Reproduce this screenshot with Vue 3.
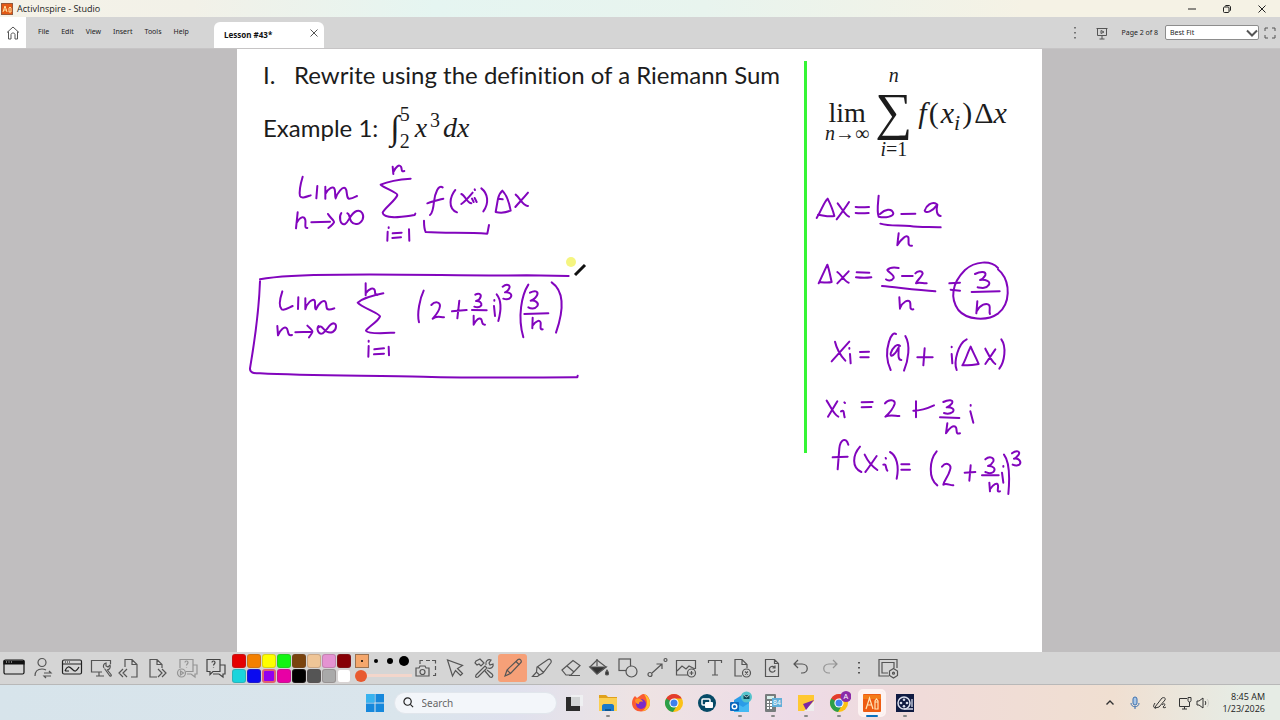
<script setup>
import { ref } from 'vue'

const zoom = ref('Best Fit')
const search = ref('')
const thickness = ref(0)
const menus = ['File', 'Edit', 'View', 'Insert', 'Tools', 'Help']

const leftTools = [
  { name: 'Desktop', svg: '<g stroke="#111"><rect x="2" y="4" width="20" height="14" rx="1.5"/><path d="M2 5h20v3H2z" fill="#111"/><path d="M4 6h1M6.500 6h1M9 6h1" stroke="#ddd"/></g>' },
  { name: 'Switch user', svg: '<circle cx="11" cy="6.500" r="4"/><path d="M4 20c0-5 2-7 7-7 2 0 3 .5 4 1M13 17h7l-2-2M20 20h-7l2 2"/>' },
  { name: 'Annotate', svg: '<g stroke="#222"><rect x="2.500" y="4" width="19" height="14" rx="1.500"/><path d="M3 8h18M5 6h1M7 6h1M9 6h1M5 15c2-5 4-5 7-2s4 3 7-2M5 15h4"/></g>' },
  { name: 'Desktop tools', svg: '<path d="M13 16H2.500V4.500h19V8M7 20h8M10 16v4"/><path d="M15 12a3.200 3.200 0 0 1 2-5v3l2 1 2-2c1 3-1 5-3 5M15.500 12.500L20.500 19.500M18 13.500l4 5c1 2-1 2-1.500 1"/>' },
  { name: 'Previous page', svg: '<path d="M8 11V3.500h7l5 5V21h-6M15 3.500v5h5M10 13l-4 4 4 4M6 13l-4 4 4 4"/>' },
  { name: 'Next page', svg: '<path d="M11 21H4V3.500h7l5 5V12M11 3.500v5h5M12 13l4 4-4 4M16 13l4 4-4 4"/>' },
  { name: 'ExpressPoll', dim: true, svg: '<path d="M5 12V3.500h13v12h-7M18 9h4v9h-2v3l-4-3h-4M10 6.500c0-2 3-2 3 0 0 1.500-1.500 1.500-1.500 3M11.500 11.500v.5"/><circle cx="6.500" cy="17" r="4"/><path d="M5.500 15l3 2-3 2z"/>' },
  { name: 'Response', svg: '<path d="M3 3.500h13v12H9l-3 3v-3H3zM16 9h5v9h-2v3l-4-3H9M8 6.500c0-2 3-2 3 0 0 1.500-1.500 1.500-1.500 3M9.500 11.500v.5" stroke="#444"/>' }
]

const swatches = ['#e50000', '#f38000', '#ffff00', '#12f512', '#79430e', '#efc597', '#e493d2', '#870006', '#19d4dc', '#0a0af0', '#9200f0', '#e800a5', '#000000', '#555555', '#a9a9a9', '#ffffff']

const rightTools = [
  { name: 'Camera', svg: '<path d="M6 8V4.500h3M12 4.500h4M18 4.500h3.500v3M21.500 10v4M21.500 17v2.500H19"/><path d="M2 12h3l1-2h5l1 2h3v8H2z"/><circle cx="8.500" cy="16" r="2.500"/>' },
  { name: 'Select', svg: '<path d="M4.500 4l5 16 3-5.500 5 5 2-2-5-5 5-3z"/>' },
  { name: 'Tools', svg: '<path d="M4 19l9-9 2 2-9 9c-2 1-3 0-2-2zM14 9c-1-4 2-6 5-5l-2 3 1 2 3-1c1 3-2 5-5 4M4 5l4-2 4 4-3 3-2-2-2 1-2-2zM13 15l5 6c2 1 4-1 2-3l-5-4"/>' },
  { name: 'Pen', active: true, svg: '<path d="M4 20l2-6L17 3.500c2-1 4 1 3 3L9.500 17.500zM6 14l3.500 3.500M15 5.500l3.500 3.500"/>' },
  { name: 'Highlighter', svg: '<path d="M2.500 20.500l4-4.500 3 3-2 1.500zM6.500 16l.5-5L18 3.500c2-1 4 1 3 3L13 17l-3.500 2M7.500 10.500l6 6"/>' },
  { name: 'Eraser', svg: '<path d="M3 14L14 4.500l7 5L12 19H7zM8 10l7 6M10 19.500h11"/>' },
  { name: 'Fill', svg: '<path d="M3 11l7-7 9 7-9 7z"/><path d="M3 11h16l-9 7z" fill="#333"/><path d="M10 10V3"/><path d="M20 14c3 4 1 5 0 5s-3-1 0-5z" fill="#333"/>' },
  { name: 'Shape', svg: '<rect x="3" y="3" width="11.500" height="11.500"/><circle cx="15.500" cy="15.500" r="5.500" fill="#d5d5d5"/>' },
  { name: 'Connector', svg: '<circle cx="5" cy="18.500" r="2"/><circle cx="20.500" cy="4" r="1.500"/><path d="M7 17L17 8M11.500 8H17v5"/>' },
  { name: 'Insert media', svg: '<path d="M14 19H2.500V4.500h19V13M3 15l5-5 4 3 3-3 6 3"/><circle cx="17.500" cy="17" r="4"/><path d="M15.500 17h4M17.500 15v4"/>' },
  { name: 'Text', svg: '<path d="M5.500 7V4.500h13V7M12 4.500V19M9 19h6"/>' },
  { name: 'Clear page', svg: '<path d="M11 20H4V3.500h7l5 5V12M11 3.500v5h5"/><circle cx="15.500" cy="17" r="4"/><path d="M14 15.500l3 3M17 15.500l-3 3"/>' },
  { name: 'Reset page', svg: '<path d="M5.500 3.500h9l4 4V20.500h-13zM14.500 3.500v4h4M15 12c-3-4-7 0-5 3 2 2 5 1 5-1M15 9.500V12h-2.500"/>' },
  { name: 'Undo', svg: '<path d="M9 4L5 8l4 4M5 8h8c7 0 7 9 0 9h-1"/>' },
  { name: 'Redo', dim: true, svg: '<path d="M15 4l4 4-4 4M19 8h-8c-7 0-7 9 0 9h1"/>' },
  { name: 'More', svg: '<path d="M12 6v1.500M12 11v1.500M12 16v1.500" stroke-width="2"/>' },
  { name: 'Toolbox', svg: '<path d="M13 20H3V3.500h18V12M12 17H6V6.500h12V12" /><path d="M13.500 15l4-2.500 4 2.500v4.500l-4 2.500-4-2.500z" fill="#d5d5d5"/><circle cx="17.500" cy="17.200" r="1"/>' }
]

const chrome = '<circle cx="12" cy="12" r="9" fill="#fbc116"/><path d="M4.200 7.500A9 9 0 0 0 11 21l4.500-7.500L12 12z" fill="#2c9f49"/><path d="M4.200 7.500L8 14l4-2V7.500z" fill="#2c9f49"/><path d="M4.200 7.500A9 9 0 0 1 19.800 7.500H12L8.500 10z" fill="#e33b2e"/><circle cx="12" cy="12" r="4.600" fill="#fff"/><circle cx="12" cy="12" r="3.500" fill="#3f80ee"/>'

const apps = [
  { name: 'Task view', svg: '<path d="M3 6h14v14H3z" fill="#2b2b2b"/><path d="M8 4h12v11H8z" fill="#f0f2f3" opacity=".85"/>' },
  { name: 'File Explorer', run: true, svg: '<path d="M3 4h7l2 2h9v14H3z" fill="#e0a11c"/><path d="M3 7h18v13H3z" fill="#fbcf52"/><path d="M6 15c0-1 1-2 2-2h8c1 0 2 1 2 2v5H6z" fill="#1b79c9"/><path d="M9 18h6v2H9z" fill="#0c5591"/>' },
  { name: 'Firefox', svg: '<path d="M12 4c4-3 9 2 9 8 0 5-4 8.500-9 8.500S3 17 3 12c0-3 1-5 3-7l2 2z" fill="#fb5b32"/><path d="M15 3c4 2 6 6 6 9 0 5-4 8-8 8 5-2 7-10 2-17z" fill="#ffc42c"/><circle cx="12" cy="13" r="5" fill="#7a2cc9"/><path d="M6 9c3-3 7-1 8 2-3-1-4 0-4 2-3 0-4-2-4-4z" fill="#ff9526"/>' },
  { name: 'Chrome', svg: chrome },
  { name: 'Connect', svg: '<circle cx="12" cy="12" r="9" fill="#064a66"/><rect x="7" y="8" width="8" height="6" rx="1" fill="none" stroke="#fff" stroke-width="1.500"/><rect x="10" y="11" width="8" height="6" rx="1" fill="#fff"/>' },
  { name: 'Outlook', run: true, svg: '<path d="M6 9l8-5 7 5v12H6z" fill="#2b9ce8"/><path d="M6 11l9 5 6-4v9H6z" fill="#45b9f3"/><rect x="2" y="11" width="9" height="9" rx="1" fill="#0b67bd"/><circle cx="6.500" cy="15.500" r="2.300" fill="none" stroke="#fff" stroke-width="1.400"/><circle cx="18.500" cy="6" r="5.500" fill="#55c3cc"/><rect x="15.500" y="4" width="6" height="4" fill="#0d4a58"/><path d="M15.500 4l3 2 3-2" stroke="#fff" stroke-width=".7" fill="none"/>' },
  { name: 'Calculator', run: true, svg: '<rect x="4" y="3" width="11" height="18" rx="1" fill="#777c7d"/><path d="M6 5h7v3H6z" fill="#d9f0ea"/><path d="M6 10h2v2H6zM9 10h2v2H9zM6 13h2v2H6zM9 13h2v2H9zM6 16h2v2H6zM9 16h2v2H9z" fill="#fff"/><rect x="11" y="7" width="10" height="9" fill="#62afd9"/><text x="12" y="14" font-family="Liberation Sans, sans-serif" font-size="7" fill="#fff">84</text>' },
  { name: 'Notes', run: true, svg: '<path d="M4 4h16v16H4z" fill="#ffc832"/><path d="M20 10v10H10z" fill="#eee"/><path d="M20 9L9 13l3 6z" fill="#7b28a5"/>' },
  { name: 'Chrome profile', run: true, svg: chrome + '<circle cx="19" cy="5.500" r="5.500" fill="#8b2ba8"/><text x="16.600" y="8" font-family="Liberation Sans, sans-serif" font-size="7" fill="#fff">A</text>' },
  { name: 'ActivInspire', run: true, active: true, svg: '<rect x="3" y="3" width="18" height="18" rx="1" fill="#ee5b13"/><path d="M3 4h18v4H3z" fill="#f47b18"/><path d="M6 18l3.500-11L13 18M7.500 14h4M15 18v-8l1.500-2 1.500 2v8zM15 11h3" fill="none" stroke="#ffe4b5" stroke-width="1.200"/>' },
  { name: 'Video editor', run: true, svg: '<rect x="3" y="3" width="18" height="18" fill="#101b42"/><circle cx="11" cy="12" r="6" fill="none" stroke="#d8dceb" stroke-width="1.500"/><circle cx="11" cy="8.800" r="1.300" fill="#d8dceb"/><circle cx="8" cy="12" r="1.300" fill="#d8dceb"/><circle cx="14" cy="12" r="1.300" fill="#d8dceb"/><circle cx="11" cy="15.200" r="1.300" fill="#d8dceb"/><path d="M11 18h9M19 8v8" stroke="#d8dceb" stroke-width="1.300"/>' }
]

/* Pen strokes, grouped by the region of the slide they were written in */
const ink = [
  { x: 250, y: 50, strokes: [
    'M158 380C152 400 147 425 150 438C153 447 170 440 182 436M202 408L199 445',
    'M226 410L226 446M226 432C234 415 250 406 254 418C257 428 254 440 257 445C262 428 278 408 286 415C293 422 288 442 296 446C305 447 315 441 321 438',
    'M143 487L138 535M140 518C150 500 163 496 166 510C168 520 162 536 172 534',
    'M184 517L240 515M234 492C240 503 254 512 252 517C250 522 240 530 235 534',
    'M274 489C266 500 270 527 285 522C298 515 300 490 320 483C335 478 343 495 338 508C330 525 312 526 304 515C296 502 300 492 292 490',
    'M428 350L430 372M430 366C437 350 448 342 453 350C457 358 452 366 463 363',
    'M482 386C450 388 410 396 392 404C405 415 442 428 442 435C440 448 400 478 398 488C400 502 430 503 455 500C475 498 490 496 494 495L496 491',
    'M413 545L412 572M416 532L416 534M428 550L455 548M427 564L453 562M477 538L478 572',
    'M522 512C522 525 524 540 527 546C590 550 650 546 712 551L717 525',
    'M578 412C565 403 555 430 552 455C550 475 548 490 540 495M532 460C545 455 565 450 580 446',
    'M616 420C600 440 592 475 621 487M634 432C645 436 652 460 664 460M668 428C658 440 645 455 634 462',
    'M666 446L671 456M674 444L680 456M674 418L675 420M694 415C714 430 718 460 700 484',
    'M744 446L737 486C750 489 770 487 782 482C778 460 770 435 757 422C750 428 746 438 744 446L758 448',
    'M797 434C810 444 820 470 834 468M834 428C820 445 805 460 796 471'
  ] },
  { x: 240, y: 250, strokes: [
    'M60 88C100 80 200 74 300 74C500 71 700 79 860 76L986 78',
    'M60 94C58 150 48 250 30 355C29 368 40 370 60 370C200 378 400 376 550 380C700 384 850 383 1012 382L1013 377',
    'M127 124C120 145 116 170 125 178C135 183 148 172 158 168M175 142L174 177',
    'M196 145L196 178C200 160 218 143 224 152C228 162 222 175 228 178C234 162 250 148 256 155C262 163 256 176 264 178C272 180 280 176 283 175',
    'M112 228L114 256C120 240 135 226 141 236C146 246 142 258 156 255',
    'M166 247L214 245M202 227C210 235 220 242 217 246C215 252 210 258 207 262',
    'M236 228C228 238 236 255 248 250C260 242 268 222 280 220C292 220 290 240 278 246C262 252 254 240 248 234C243 228 240 228 236 232',
    'M377 100L377 136M377 130C388 115 400 112 404 120C407 128 402 134 412 134',
    'M430 130C405 135 370 143 353 158C365 172 418 190 420 199C415 215 382 232 378 242C385 254 440 249 463 248',
    'M386 288L385 320M386 272L386 275M403 298L432 295M402 313L432 311M446 290L447 316',
    'M551 122C540 145 530 190 537 217M574 165C585 153 600 155 600 168C598 185 585 198 578 206C590 196 600 202 612 202',
    'M636 184L680 180M658 152L652 205M706 134C715 128 724 132 722 140C720 148 712 152 708 153C718 152 726 158 724 166C718 174 708 172 703 170',
    'M696 180L740 181M701 197L701 224C708 210 718 200 724 208C728 216 724 225 735 224',
    'M762 168L765 198M763 150L763 152M770 133C784 150 784 180 775 213',
    'M788 110C800 100 812 105 808 114C805 122 798 126 795 127C808 126 818 132 812 142C805 150 795 148 790 146',
    'M865 104C845 135 832 200 850 262M870 128C885 120 895 124 892 134C888 144 878 150 872 152C885 150 898 158 892 168C885 178 872 176 865 172',
    'M853 192L925 190M878 203L877 235M877 228C888 212 900 208 902 218C903 226 898 240 908 238M935 97C968 120 975 170 948 248'
  ] },
  { x: 790, y: 50, strokes: [
    'M80 504C95 480 102 455 113 446C120 460 130 485 133 498C118 502 100 496 84 494',
    'M143 460C155 475 165 495 177 500M177 456C165 475 150 495 140 508M197 471C210 473 225 472 237 471M197 489C210 491 225 490 236 489',
    'M266 437C264 460 260 485 266 500C285 505 310 500 310 490C305 473 285 478 270 492M334 492L376 491',
    'M440 462C425 453 408 468 404 482C408 492 428 484 442 464C438 480 440 497 452 498',
    'M271 521C300 530 330 524 360 528C390 533 420 530 452 532M326 550C324 565 323 575 322 586C335 565 350 553 355 562C358 572 350 590 366 587'
  ] },
  { x: 800, y: 240, strokes: [
    'M56 130L82 74C88 90 92 115 95 126C85 129 70 127 58 126M112 96C125 105 134 126 146 128M146 94L112 130',
    'M170 97L208 98M168 112C185 114 200 114 214 112',
    'M296 84C280 81 268 83 262 90C266 98 284 105 281 114C275 124 262 122 258 118M306 108L338 108',
    'M346 100C352 93 366 90 368 100C366 110 350 122 348 130C358 126 370 131 380 130M246 138C290 142 350 150 406 154',
    'M298 172L300 206M300 204C308 186 325 176 330 186C334 195 326 210 340 208M448 130L480 128M452 149L480 152',
    'M525 102C540 94 560 92 556 106C550 116 545 119 540 120C558 118 572 124 567 134C558 147 545 144 533 142',
    'M515 156L599 154M532 184L529 220M530 214C540 195 560 186 568 196C572 205 566 215 570 222',
    'M594 84C572 60 525 63 495 90C455 130 450 175 475 210C500 240 560 245 595 220C632 190 630 130 604 98L594 88',
    'M105 305C112 335 125 350 136 362M148 305C130 325 110 348 95 364M150 342L152 370M148 324L148 326',
    'M180 336L207 335M181 352L206 352M288 282C282 276 272 286 267 305C256 340 260 365 272 390',
    'M300 318C292 308 278 322 272 340C270 355 285 345 296 322C296 340 292 360 304 360M316 288C332 315 325 360 312 392',
    'M352 352L398 352M374 325L370 376M455 342L457 370M455 320L455 322M500 298C475 310 460 365 470 390',
    'M512 320C502 340 495 365 487 376C500 376 520 376 536 372C528 352 518 335 512 320M556 326C566 345 575 365 586 372M586 328L556 372M604 298C620 320 614 365 598 386'
  ] },
  { x: 800, y: 370, strokes: [
    'M80 92C92 110 102 135 115 140M112 94L84 140M123 124C134 118 130 130 134 142M133 97L135 99M185 97L218 96M185 112L214 111',
    'M255 100C265 86 287 88 284 102C278 120 265 132 256 140C270 133 285 138 298 138M340 122C360 122 385 114 402 106M348 94L348 142',
    'M430 96C445 88 462 88 456 100C450 108 445 110 440 112C455 111 466 118 458 126C450 132 438 131 432 129M420 142L478 144',
    'M442 160L438 190C448 174 460 163 468 172C472 182 466 194 480 190M511 124L520 158M512 105L512 107',
    'M145 224C138 200 121 208 118 235L113 298M98 262L143 260M180 230C158 255 154 292 184 306',
    'M194 254C204 275 220 292 232 300M230 258C218 275 205 295 196 306M250 284C260 280 256 295 262 302M257 264L258 266M270 246C290 256 298 290 290 326',
    'M304 283L328 283M304 299L330 299M410 244C388 270 384 325 412 346M426 290C440 273 456 285 450 300C445 320 432 332 430 344C440 338 450 347 460 346',
    'M494 308L526 306M512 286L508 332M556 268C570 256 584 264 580 274C575 284 570 286 564 288C578 287 590 296 580 306C570 314 562 308 556 306',
    'M546 316L596 316M568 338L570 364M570 358C580 342 592 336 594 346C596 355 588 368 600 364M606 308L610 338M610 288L610 290',
    'M612 254C632 280 628 340 625 372M636 250C650 239 662 244 656 254C650 262 646 265 642 266C656 264 666 275 658 284C650 289 642 286 638 284'
  ] }
]
</script>

<template>
  <div class="screen">
    <header class="title">
      <svg class="logo" viewBox="0 0 12 12"><rect width="12" height="12" rx="1" fill="#e35a16" /><path d="M2 9l2-6 2 6M3 7h3M8 9V5l1-1 1 1v4z" fill="none" stroke="#ffe0a0" /></svg>
      <span>ActivInspire - Studio</span>
      <div class="wincontrols">
        <button aria-label="Minimise"><svg viewBox="0 0 12 12"><path d="M2 6h8" /></svg></button>
        <button aria-label="Restore"><svg viewBox="0 0 12 12"><rect x="2.500" y="4" width="5.500" height="5.500" rx="1" /><path d="M4 3.500c0-1 1-1 1-1h3c1 0 1.500 1 1.500 1.500v3c0 1-1 1-1 1" /></svg></button>
        <button aria-label="Close"><svg viewBox="0 0 12 12"><path d="M2.500 2.500l7 7M9.500 2.500l-7 7" /></svg></button>
      </div>
    </header>

    <nav class="menubar">
      <button class="home" aria-label="Home"><svg viewBox="0 0 16 16"><path d="M2 7.500l6-5.500 6 5.500M3.500 6.500V14H6V9.500c0-2 4-2 4 0V14h2.500V6.500" /></svg></button>
      <div class="menus"><button v-for="m in menus" :key="m">{{ m }}</button></div>
      <div class="tab"><span>Lesson #43*</span><button aria-label="Close tab"><svg viewBox="0 0 10 10"><path d="M1.500 1.500l7 7M8.500 1.500l-7 7" /></svg></button></div>
      <div class="view">
        <button aria-label="More options"><svg viewBox="0 0 16 16"><path d="M8 2v1.500M8 7v1.500M8 12v1.500" stroke-width="1.500" /></svg></button>
        <button aria-label="Present"><svg viewBox="0 0 16 16"><path d="M2.500 3.500h11M3.500 3.500v7h9v-7M8 10.500V14M5.500 14h5M7 5.500l3 1.500-3 1.500z" /></svg></button>
        <label for="zoom">Page 2 of 8</label>
        <div class="select">
          <select id="zoom" v-model="zoom"><option>Best Fit</option><option>Page Width</option></select>
          <svg viewBox="0 0 12 8"><path d="M1 1.500l5 5 5-5" /></svg>
        </div>
        <button aria-label="Full screen"><svg viewBox="0 0 16 16"><path d="M3 6V3h3M10 3h3v3M13 10v3h-3M6 13H3v-3" /></svg></button>
      </div>
    </nav>

    <main class="workspace">
      <article class="page">
        <section class="notes">
          <h1><span>I.</span>Rewrite using the definition of a Riemann Sum</h1>
          <p class="example">
            <span>Example 1:</span>
            <span class="math integral">
              <span class="int">∫</span>
              <span class="bounds"><span>5</span><span>2</span></span>
              <span><i>x</i><sup>3</sup><i>dx</i></span>
            </span>
          </p>
        </section>
        <aside>
          <div class="math formula">
            <div class="limit"><span>lim</span><small><i>n</i>→∞</small></div>
            <div class="sum"><small><i>n</i></small><span>∑</span><small><i>i</i>=1</small></div>
            <div class="term"><i>f</i><b>(</b><i>x<sub>i</sub></i><b>)</b>Δ<i>x</i></div>
          </div>
        </aside>
        <svg class="ink" viewBox="237 49 805 603" preserveAspectRatio="xMinYMin meet" role="img" aria-label="Handwritten working">
          <g v-for="g in ink" :key="g.x + '-' + g.y" :transform="`translate(${g.x} ${g.y}) scale(.33333)`">
            <path v-for="(d, i) in g.strokes" :key="i" :d="d" />
          </g>
          <circle cx="571" cy="262" r="5" class="spot" />
          <path d="M575 275L585 265" class="nib" />
        </svg>
      </article>
    </main>

    <div class="toolbar">
      <div class="group left">
        <button v-for="t in leftTools" :key="t.name" :aria-label="t.name" :class="{ dim: t.dim }"><svg viewBox="0 0 24 24" v-html="t.svg"></svg></button>
      </div>
      <div class="palette">
        <button v-for="(c, i) in swatches" :key="c" :aria-label="'Colour ' + c" :class="{ chosen: i === 10 }" :style="{ background: c }"></button>
      </div>
      <div class="pens">
        <div class="sizes">
          <button class="on" aria-label="Size 1"><svg viewBox="0 0 14 14"><circle cx="7" cy="7" r="1" /></svg></button>
          <button aria-label="Size 2"><svg viewBox="0 0 14 14"><circle cx="7" cy="7" r="2" /></svg></button>
          <button aria-label="Size 3"><svg viewBox="0 0 14 14"><circle cx="7" cy="7" r="3" /></svg></button>
          <button aria-label="Size 4"><svg viewBox="0 0 14 14"><circle cx="7" cy="7" r="5" /></svg></button>
        </div>
        <input v-model="thickness" type="range" min="0" max="100" aria-label="Pen width" />
      </div>
      <div class="group right">
        <button v-for="t in rightTools" :key="t.name" :aria-label="t.name" :class="{ dim: t.dim, active: t.active }"><svg viewBox="0 0 24 24" v-html="t.svg"></svg></button>
      </div>
    </div>

    <footer class="taskbar">
      <div class="apps">
        <button aria-label="Start"><svg viewBox="0 0 24 24"><path d="M3 3h8.500v8.500H3zM12.500 3H21v8.500h-8.500zM3 12.500h8.500V21H3zM12.500 12.500H21V21h-8.500z" fill="#1688dc" /><path d="M3 3h8.500v8.500H3z" fill="#38b3ef" /></svg></button>
        <label class="search">
          <svg viewBox="0 0 12 12"><circle cx="5" cy="5" r="4" /><path d="M8 8l3 3" /></svg>
          <input v-model="search" type="text" placeholder="Search" aria-label="Search" />
        </label>
        <button v-for="a in apps" :key="a.name" :aria-label="a.name" :class="{ run: a.run, front: a.active }"><svg viewBox="0 0 24 24" v-html="a.svg"></svg></button>
      </div>
      <div class="tray">
        <button aria-label="Hidden icons"><svg viewBox="0 0 16 16"><path d="M4.500 9.500L8 6l3.500 3.500" stroke-width="1.400" /></svg></button>
        <button aria-label="Microphone"><svg viewBox="0 0 16 16"><g stroke="#3b6fae"><rect x="6" y="2" width="4" height="8" rx="2" fill="#a9c6e6" /><path d="M4 8c0 5 8 5 8 0M8 12v2" /></g></svg></button>
        <button aria-label="Pen menu"><svg viewBox="0 0 16 16"><path d="M3 12L10 3c2-1 4 0 3 2L7 12l-4 1zM3 8c-2 3-2 5 1 5M10 10c3-3 4 0 1 2 0 1 2 1 3 0" /></svg></button>
        <button aria-label="Network and sound" class="net">
          <svg viewBox="0 0 16 16"><path d="M10 3.500H2.500v8h10V9M5 14h5M7.500 11.500V14M11 2.500v3c0 2 3 2 3 0v-3zM12.500 7v4" /></svg>
          <svg viewBox="0 0 16 16"><path d="M3 6v4h2l4 3V3L5 6zM11 6c1 1 1 3 0 4" /><path d="M13 4c2 2 2 6 0 8" stroke="#c9c9c4" /></svg>
        </button>
        <div class="clock"><span>8:45 AM</span><span>1/23/2026</span></div>
      </div>
    </footer>
  </div>
</template>

<style>
html, body { margin: 0; }
</style>

<style scoped>
* { box-sizing: border-box; }
.screen { min-height: 100vh; display: grid; grid-template-rows: 17px 32px 1fr 33px 35px; font-family: "Noto Sans", sans-serif; color: #222; }
button { border: 0; padding: 0; background: none; font: inherit; color: inherit; display: grid; place-items: center; }
svg { display: block; fill: none; stroke: #555; stroke-width: 1; }

.title { display: flex; align-items: center; padding-left: 1px; gap: 4px; font-size: 9px; line-height: 12px; font-family: "Open Sans", sans-serif; background: linear-gradient(90deg, #f5f2e8, #f2f1e8 15%, #e5f5f1 34%, #e8f4ee 55%, #f5f2e5 80%); }
.logo { width: 12px; height: 12px; }
.wincontrols { margin-left: auto; display: flex; gap: 23px; padding-right: 12px; }
.wincontrols svg { width: 12px; height: 12px; stroke: #222; }

.menubar { display: flex; background: #d5d5d5; font-size: 7px; line-height: 10px; border-bottom: 1px solid #c6c4c5; }
.home { width: 26px; background: #fff; }
.home svg { width: 16px; height: 16px; }
.menus { display: flex; gap: 12px; width: 188px; padding: 10px 0 0 12px; align-items: flex-start; }
.tab { display: flex; align-items: center; justify-content: space-between; width: 110px; margin-top: 5px; padding: 0 5px 0 10px; border-radius: 6px 6px 0 0; background: #fff; font-weight: 700; font-size: 8px; color: #111; }
.tab svg { width: 10px; height: 10px; }
.tab button { align-self: flex-start; margin-top: 6px; }
.view { margin-left: auto; display: flex; align-items: center; padding-right: 2px; gap: 11px; }
.view button svg { width: 16px; height: 16px; }
.view > button:last-child { margin-left: -8px; }
.view label { margin-right: -4px; }
.select { position: relative; }
.select select { appearance: none; width: 94px; height: 15px; padding: 0 4px; border: 1px solid #8d8d8d; border-radius: 2px; background: #fff; font: inherit; color: #222; }
.select svg { position: absolute; right: 1px; top: 4px; width: 12px; height: 8px; stroke: #555; stroke-width: 2; pointer-events: none; }

.workspace { display: grid; grid-template-columns: 237fr 805fr 238fr; background: #c0bebf; }
.page { grid-column: 2; position: relative; background: #fff; display: grid; grid-template-columns: 567fr 238fr; align-items: start; color: #1c1c1c; }
.notes { padding: 11px 0 0 26px; font-family: Lato, sans-serif; font-variant-ligatures: none; }
h1 { display: flex; margin: 0; font-size: 24px; line-height: 30px; font-weight: 400; white-space: nowrap; }
h1 span { width: 31px; }
.example { display: flex; align-items: center; gap: 12px; margin: 11px 0 0; font-size: 24px; line-height: 50px; }
.math { font-family: "Liberation Serif", serif; white-space: nowrap; }
.integral { display: flex; align-items: center; font-size: 28px; }
.int { font-size: 34px; }
.bounds { display: grid; font-size: 20px; line-height: 27px; margin-right: 5px; }
sup { font-size: 20px; line-height: 0; margin: 0 3px; }
sub { font-size: 22px; line-height: 0; }
b { font-weight: 400; margin: 0 2px; }
aside { margin-top: 12px; height: 392px; border-left: 3px solid #35f535; padding-left: 18px; }
.formula { display: flex; align-items: flex-start; gap: 6px; font-size: 28px; line-height: 28px; padding-top: 4px; }
.formula small { font-size: 20px; line-height: 20px; }
.limit, .sum { display: grid; justify-items: center; }
.limit { padding-top: 34px; }
.limit small { line-height: 12px; }
.sum span { font-size: 52px; line-height: 54px; }
.term { padding-top: 34px; font-size: 30px; }
.ink { position: absolute; inset: 0; width: 100%; height: 100%; stroke: #8205bd; stroke-width: 6; stroke-linecap: round; stroke-linejoin: round; }
.spot { fill: #f5f580; stroke: none; }
.nib { stroke: #111; stroke-width: 3; stroke-linecap: butt; }

.toolbar { display: flex; align-items: center; background: #d5d5d5; border-bottom: 1px solid #b8b8b8; }
.group { display: grid; grid-auto-flow: column; grid-auto-columns: 1fr; }
.group svg { width: 24px; height: 24px; stroke-width: 1.2; }
.group button { height: 28px; border-radius: 3px; }
.left { width: 230px; }
.right { width: 490px; }
.dim { opacity: .5; }
.active { background: #f6a078; }
.palette { display: grid; grid-template-columns: repeat(8, 14px); gap: 1px; margin-left: 2px; }
.palette button { height: 14px; border-radius: 3px; border: 1px solid rgba(100, 80, 80, .25); }
.palette .chosen { border: 2px solid #e06070; }
.pens { width: 61px; padding-left: 4px; display: grid; gap: 1px; }
.sizes { display: flex; }
.sizes svg { width: 14px; height: 14px; fill: #000; stroke: none; }
.sizes .on { background: #f5a76c; outline: 1px solid #9b7250; outline-offset: -1px; }
input[type="range"] { appearance: none; margin: 0; width: 57px; height: 14px; background: linear-gradient(#f3d6cb, #f3d6cb) center / 100% 3px no-repeat; }
input[type="range"]::-webkit-slider-thumb { appearance: none; width: 12px; height: 12px; border-radius: 50%; background: #e8592f; }

.taskbar { display: grid; grid-template-columns: 1fr auto 1fr; align-items: center; background: linear-gradient(90deg, #d7e4eb, #dae5ec 32%, #dfe1ee 40%, #eee3e3 50%, #eddbe7 62%, #f0dbd9 72%, #f0dfd1 87%, #e6ece5 97%); }
.apps { grid-column: 2; display: flex; align-items: center; }
.apps button { width: 33px; height: 35px; position: relative; }
.apps button svg { width: 24px; height: 24px; stroke: none; }
.apps .run::after { content: ""; position: absolute; bottom: 3px; width: 4px; height: 2px; border-radius: 1px; background: #888; }
.apps .front svg { background: #fdf3f2; border-radius: 3px; outline: 2px solid #fdf3f2; }
.apps .front::after { width: 12px; background: #0a6fbd; }
.search { display: flex; align-items: center; gap: 8px; width: 163px; height: 22px; margin: 0 2px; padding-left: 8px; border-radius: 11px; background: #f3f6fa; border: 1px solid #e1e6ec; }
.search svg { width: 11px; height: 11px; stroke: #222; stroke-width: 1.3; flex: none; }
.search input { border: 0; padding: 0; width: 100%; background: none; outline: 0; font: 10px/14px "Noto Sans", sans-serif; }
.search input::placeholder { color: #666; }
.tray { grid-column: 3; justify-self: end; display: flex; align-items: center; gap: 9px; padding-right: 15px; }
.tray svg { width: 16px; height: 16px; stroke: #333; }
.net { display: flex; gap: 1px; }
.clock { display: grid; justify-items: end; font: 9px/12px "Open Sans", sans-serif; margin-left: 3px; }
</style>
